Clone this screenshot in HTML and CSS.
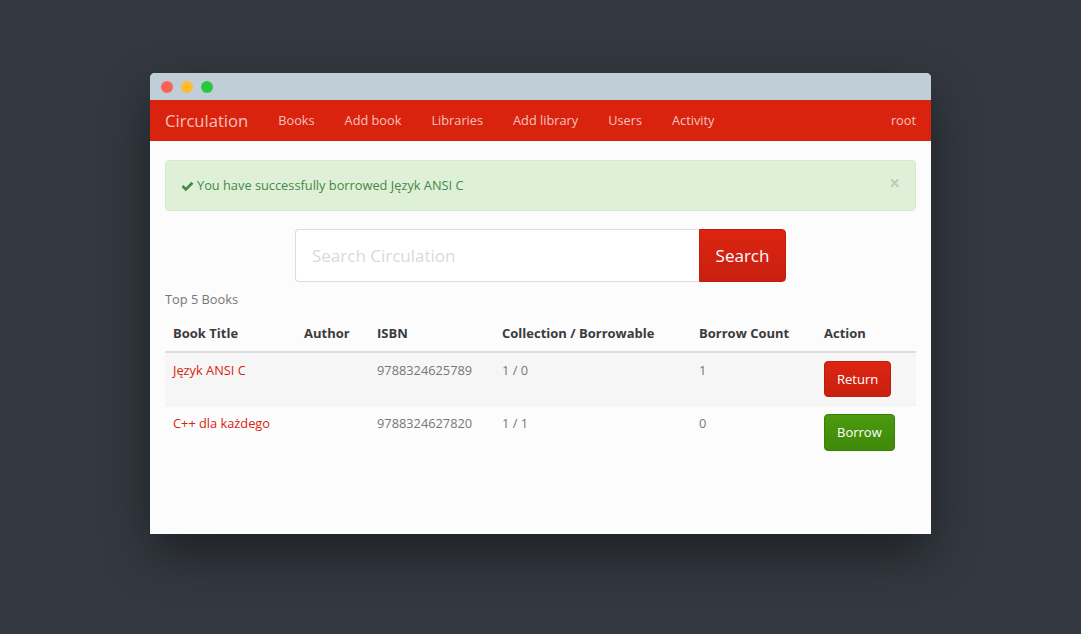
FILE: index.html
```html
<!DOCTYPE html>
<html lang="pl">
<head>
<meta charset="utf-8">
<title>Circulation</title>
<link rel="stylesheet" href="styles.css">
</head>
<body>
<div class="window">
  <div class="titlebar">
    <span class="dot dot-red"></span>
    <span class="dot dot-yellow"></span>
    <span class="dot dot-green"></span>
  </div>
  <nav class="navbar">
    <a class="brand" href="#">Circulation</a>
    <a class="nav-link" href="#">Books</a>
    <a class="nav-link" href="#">Add book</a>
    <a class="nav-link" href="#">Libraries</a>
    <a class="nav-link" href="#">Add library</a>
    <a class="nav-link" href="#">Users</a>
    <a class="nav-link" href="#">Activity</a>
    <a class="nav-link nav-right" href="#">root</a>
  </nav>
  <main class="content">
    <div class="alert">
      <svg class="check" viewBox="0 0 14 12" width="13" height="11"><path d="M0.5 6.5 L2.6 4.4 L5.2 7 L11.4 0.8 L13.5 2.9 L5.2 11.2 Z" fill="#468847"/></svg>
      <span>You have successfully borrowed Język ANSI C</span>
      <span class="close">×</span>
    </div>
    <form class="search">
      <input class="search-input" type="text" placeholder="Search Circulation">
      <button class="search-btn" type="button">Search</button>
    </form>
    <table class="books">
      <caption>Top 5 Books</caption>
      <thead>
        <tr>
          <th class="c1">Book Title</th>
          <th class="c2">Author</th>
          <th class="c3">ISBN</th>
          <th class="c4">Collection / Borrowable</th>
          <th class="c5">Borrow Count</th>
          <th class="c6">Action</th>
        </tr>
      </thead>
      <tbody>
        <tr class="striped">
          <td><a href="#">Język ANSI C</a></td>
          <td></td>
          <td>9788324625789</td>
          <td>1 / 0</td>
          <td>1</td>
          <td><button class="btn btn-return" type="button">Return</button></td>
        </tr>
        <tr>
          <td><a href="#">C++ dla każdego</a></td>
          <td></td>
          <td>9788324627820</td>
          <td>1 / 1</td>
          <td>0</td>
          <td><button class="btn btn-borrow" type="button">Borrow</button></td>
        </tr>
      </tbody>
    </table>
  </main>
</div>
</body>
</html>
```
FILE: styles.css
```css
html, body {
  margin: 0;
  padding: 0;
}
body {
  background: #343941;
  font-family: "Open Sans", "Noto Sans", sans-serif;
  font-size: 12.8px;
  line-height: 19px;
  color: #777;
  padding-top: 73px;
  height: 634px;
  box-sizing: border-box;
  overflow: hidden;
}
.window {
  width: 781px;
  height: 461px;
  margin: 0 auto;
  background: #fcfcfc;
  border-radius: 5px 5px 0 0;
  box-shadow: 0 20px 50px rgba(0, 0, 0, 0.45);
  overflow: hidden;
}
.titlebar {
  height: 27px;
  background: #c0ced8;
  box-sizing: border-box;
  padding: 8px 0 0 11px;
  display: flex;
  gap: 8px;
}
.dot {
  width: 12px;
  height: 12px;
  border-radius: 50%;
  display: block;
}
.dot-red { background: #fe5f57; }
.dot-yellow { background: #febc2e; }
.dot-green { background: #28c840; }

.navbar {
  height: 41px;
  background: #d9230f;
  display: flex;
  align-items: center;
}
.navbar a {
  text-decoration: none;
  color: #f6c2bb;
}
.brand {
  font-size: 16.6px;
  padding: 0 15px;
}
.nav-link {
  padding: 0 15px;
  font-size: 12.75px;
}
.nav-right {
  margin-left: auto;
}

.content {
  padding: 19px 15px 0;
}
.alert {
  position: relative;
  background: #dff0d8;
  border: 1px solid #d6e9c6;
  border-radius: 4px;
  color: #468847;
  padding: 15px;
  display: flex;
  align-items: center;
  gap: 3px;
  margin-bottom: 18px;
}
.check {
  display: block;
  margin-top: 1px;
}
.close {
  position: absolute;
  right: 15px;
  top: 13px;
  font-size: 19px;
  font-weight: bold;
  color: #000;
  opacity: 0.15;
  line-height: 19px;
}
.search {
  display: flex;
  width: 491px;
  margin: 0 auto;
}
.search-input {
  flex: 1;
  height: 53px;
  box-sizing: border-box;
  border: 1px solid #dcdcdc;
  border-right: none;
  border-radius: 4px 0 0 4px;
  background: #fff;
  padding: 0 16px;
  font-family: "Open Sans", "Noto Sans", sans-serif;
  font-size: 17px;
  color: #555;
  outline: none;
}
.search-input::placeholder {
  color: #dadada;
}
.search-btn {
  width: 87px;
  height: 53px;
  border: 1px solid #c11f0e;
  border-radius: 0 4px 4px 0;
  background: linear-gradient(#dc2511, #c72010);
  color: #fff;
  font-family: "Open Sans", "Noto Sans", sans-serif;
  font-size: 17px;
}

.books {
  width: 100%;
  border-collapse: collapse;
  table-layout: fixed;
}
.books caption {
  text-align: left;
  padding: 8px 0 7px;
  color: #777;
}
.books th {
  text-align: left;
  font-weight: bold;
  font-size: 13px;
  color: #3b3b3b;
  padding: 8px;
  border-bottom: 2px solid #ddd;
}
.books td {
  padding: 8px;
  vertical-align: top;
  border-top: 1px solid #f0f0f0;
  color: #777;
}
.books tbody tr:first-child td {
  border-top: none;
}
.books tr.striped td {
  background: #f6f6f6;
}
.c1 { width: 115px; }
.c2 { width: 57px; }
.c3 { width: 109px; }
.c4 { width: 181px; }
.c5 { width: 109px; }
.books td a {
  color: #d9230f;
  text-decoration: none;
}
.btn {
  font-family: "Open Sans", "Noto Sans", sans-serif;
  font-size: 13px;
  line-height: 19px;
  padding: 7px 12px 8px;
  border-radius: 4px;
  color: #fff;
  display: block;
}
.btn-return {
  background: linear-gradient(#dd2511, #c92010);
  border: 1px solid #b81d0d;
  padding: 8px 12px 7px;
}
.btn-borrow {
  background: linear-gradient(#4b9a0e, #3f8a0a);
  border: 1px solid #3a7d0a;
  padding: 8px 12px;
}
```
